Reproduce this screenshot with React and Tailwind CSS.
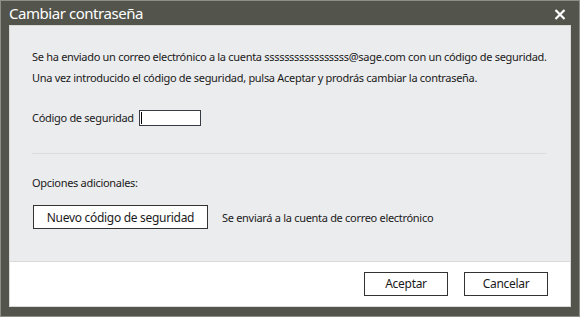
import React from 'react';

const font = { fontFamily: '"Noto Sans", "Open Sans", sans-serif' };

const App = () => {
  return (
    <div className="w-[580px] h-[317px] bg-[#53544b] border border-[#8e8e89] flex flex-col" style={font}>
      {/* Title bar */}
      <div className="h-[24px] shrink-0 flex items-center justify-between pl-[8px] pr-[13px]">
        <span className="text-[15px] leading-none text-white tracking-[-0.45px]">Cambiar contraseña</span>
        <svg width="12" height="11" viewBox="0 0 12 11" className="mt-[3px]">
          <path d="M1.5 1 L10.5 10 M10.5 1 L1.5 10" stroke="#ffffff" strokeWidth="2.2" />
        </svg>
      </div>

      {/* Body */}
      <div className="mx-[8px] flex-1 flex flex-col border border-[#d9d9d9] mb-[9px]">
        <div className="flex-1 bg-[#ebecee] px-[22px] pt-[20px] text-[11px] text-[#1a1a1a] leading-[21px] tracking-[-0.3px]">
          <p className="whitespace-nowrap">Se ha enviado un correo electrónico a la cuenta sssssssssssssssss@sage.com con un código de seguridad.</p>
          <p className="whitespace-nowrap">Una vez introducido el código de seguridad, pulsa Aceptar y prodrás cambiar la contraseña.</p>

          <div className="flex items-center mt-[19px]">
            <span className="w-[107px]">Código de seguridad</span>
            <div className="w-[62px] h-[16px] bg-white border border-[#363b45] flex items-center">
              <div className="w-[1px] h-[12px] ml-[1px] bg-black" />
            </div>
          </div>

          <div className="h-px bg-[#dadbdd] mt-[25px] mr-[2px]" />

          <p className="mt-[18px]">Opciones adicionales:</p>

          <div className="flex items-center mt-[12px]">
            <button className="ml-px w-[175px] h-[24px] bg-white border border-[#333333] text-[12px] tracking-[-0.3px] text-[#1a1a1a]">
              Nuevo código de seguridad
            </button>
            <span className="ml-[14px]">Se enviará a la cuenta de correo electrónico</span>
          </div>
        </div>

        <div className="h-[45px] shrink-0 bg-white border-t border-[#d9d9d9] flex items-center justify-end pr-[22px] gap-[16px]">
          <button className="w-[84px] h-[24px] bg-white border border-[#333333] text-[12px] tracking-[-0.3px] text-[#1a1a1a]">Aceptar</button>
          <button className="w-[84px] h-[24px] bg-white border border-[#333333] text-[12px] tracking-[-0.3px] text-[#1a1a1a]">Cancelar</button>
        </div>
      </div>
    </div>
  );
};

export default App;
